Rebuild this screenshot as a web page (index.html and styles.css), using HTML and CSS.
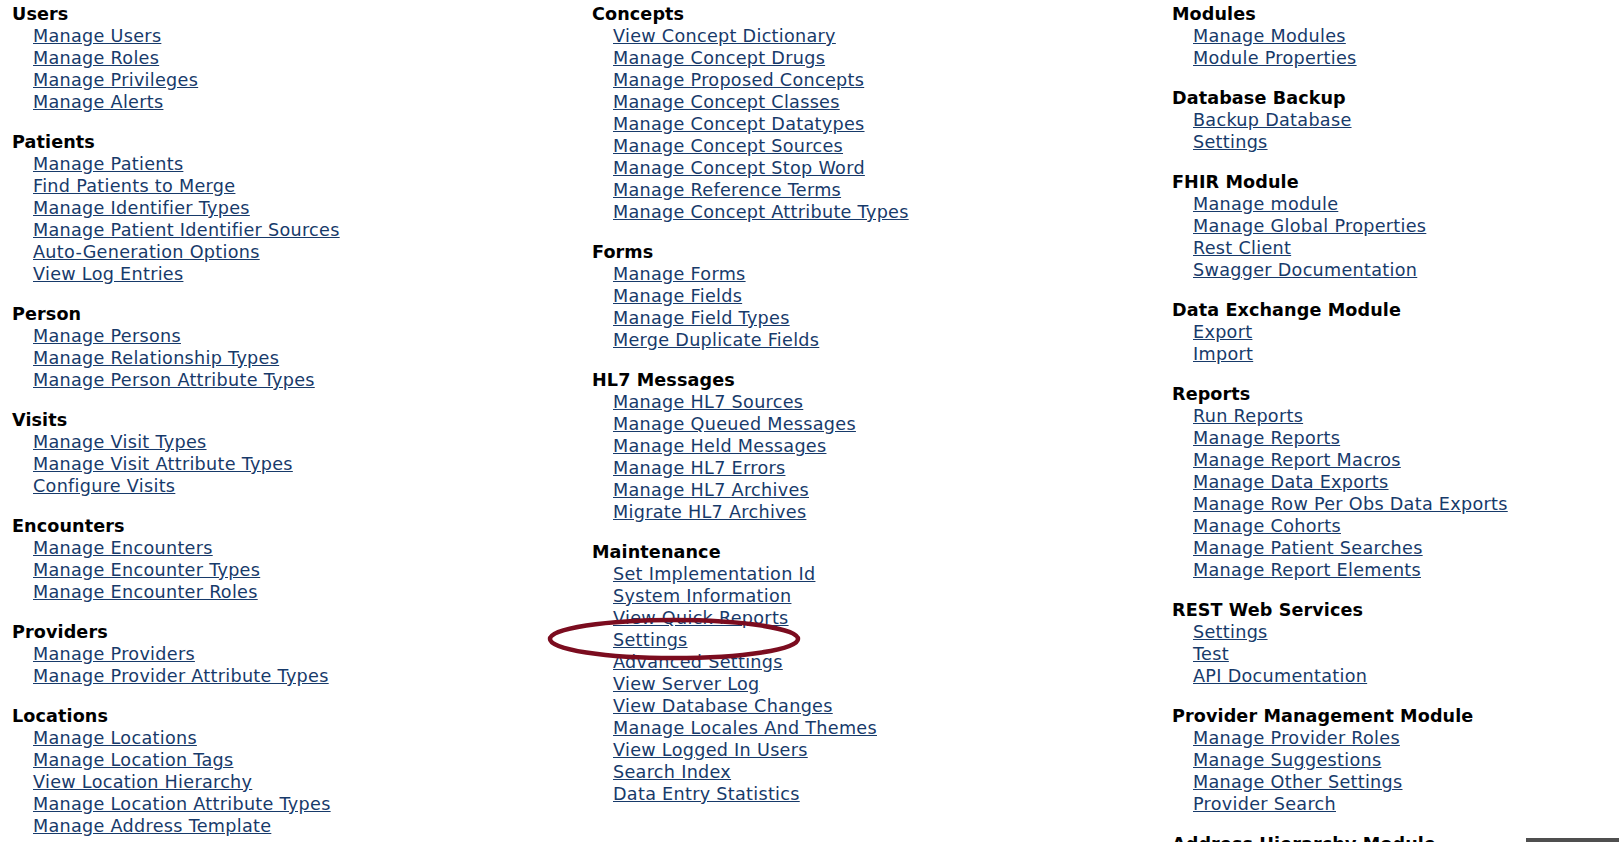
FILE: index.html
```html
<!DOCTYPE html>
<html>
<head>
<meta charset="utf-8">
<title>Administration</title>
<link rel="stylesheet" href="styles.css">
</head>
<body>
<div class="admin">
  <div class="col">
    <div class="section">
      <h4>Users</h4>
      <ul>
        <li><a href="#">Manage Users</a></li>
        <li><a href="#">Manage Roles</a></li>
        <li><a href="#">Manage Privileges</a></li>
        <li><a href="#">Manage Alerts</a></li>
      </ul>
    </div>
    <div class="section">
      <h4>Patients</h4>
      <ul>
        <li><a href="#">Manage Patients</a></li>
        <li><a href="#">Find Patients to Merge</a></li>
        <li><a href="#">Manage Identifier Types</a></li>
        <li><a href="#">Manage Patient Identifier Sources</a></li>
        <li><a href="#">Auto-Generation Options</a></li>
        <li><a href="#">View Log Entries</a></li>
      </ul>
    </div>
    <div class="section">
      <h4>Person</h4>
      <ul>
        <li><a href="#">Manage Persons</a></li>
        <li><a href="#">Manage Relationship Types</a></li>
        <li><a href="#">Manage Person Attribute Types</a></li>
      </ul>
    </div>
    <div class="section">
      <h4>Visits</h4>
      <ul>
        <li><a href="#">Manage Visit Types</a></li>
        <li><a href="#">Manage Visit Attribute Types</a></li>
        <li><a href="#">Configure Visits</a></li>
      </ul>
    </div>
    <div class="section">
      <h4>Encounters</h4>
      <ul>
        <li><a href="#">Manage Encounters</a></li>
        <li><a href="#">Manage Encounter Types</a></li>
        <li><a href="#">Manage Encounter Roles</a></li>
      </ul>
    </div>
    <div class="section">
      <h4>Providers</h4>
      <ul>
        <li><a href="#">Manage Providers</a></li>
        <li><a href="#">Manage Provider Attribute Types</a></li>
      </ul>
    </div>
    <div class="section">
      <h4>Locations</h4>
      <ul>
        <li><a href="#">Manage Locations</a></li>
        <li><a href="#">Manage Location Tags</a></li>
        <li><a href="#">View Location Hierarchy</a></li>
        <li><a href="#">Manage Location Attribute Types</a></li>
        <li><a href="#">Manage Address Template</a></li>
      </ul>
    </div>
  </div>

  <div class="col">
    <div class="section">
      <h4>Concepts</h4>
      <ul>
        <li><a href="#">View Concept Dictionary</a></li>
        <li><a href="#">Manage Concept Drugs</a></li>
        <li><a href="#">Manage Proposed Concepts</a></li>
        <li><a href="#">Manage Concept Classes</a></li>
        <li><a href="#">Manage Concept Datatypes</a></li>
        <li><a href="#">Manage Concept Sources</a></li>
        <li><a href="#">Manage Concept Stop Word</a></li>
        <li><a href="#">Manage Reference Terms</a></li>
        <li><a href="#">Manage Concept Attribute Types</a></li>
      </ul>
    </div>
    <div class="section">
      <h4>Forms</h4>
      <ul>
        <li><a href="#">Manage Forms</a></li>
        <li><a href="#">Manage Fields</a></li>
        <li><a href="#">Manage Field Types</a></li>
        <li><a href="#">Merge Duplicate Fields</a></li>
      </ul>
    </div>
    <div class="section">
      <h4>HL7 Messages</h4>
      <ul>
        <li><a href="#">Manage HL7 Sources</a></li>
        <li><a href="#">Manage Queued Messages</a></li>
        <li><a href="#">Manage Held Messages</a></li>
        <li><a href="#">Manage HL7 Errors</a></li>
        <li><a href="#">Manage HL7 Archives</a></li>
        <li><a href="#">Migrate HL7 Archives</a></li>
      </ul>
    </div>
    <div class="section">
      <h4>Maintenance</h4>
      <ul>
        <li><a href="#">Set Implementation Id</a></li>
        <li><a href="#">System Information</a></li>
        <li><a href="#">View Quick Reports</a></li>
        <li class="marked"><a href="#">Settings</a>
          <svg class="circle" width="258" height="48" viewBox="0 0 258 48" aria-hidden="true">
            <ellipse cx="129" cy="24" rx="124" ry="19" fill="none" stroke="#7b0c1f" stroke-width="4.5"/>
          </svg>
        </li>
        <li><a href="#">Advanced Settings</a></li>
        <li><a href="#">View Server Log</a></li>
        <li><a href="#">View Database Changes</a></li>
        <li><a href="#">Manage Locales And Themes</a></li>
        <li><a href="#">View Logged In Users</a></li>
        <li><a href="#">Search Index</a></li>
        <li><a href="#">Data Entry Statistics</a></li>
      </ul>
    </div>
  </div>

  <div class="col">
    <div class="section">
      <h4>Modules</h4>
      <ul>
        <li><a href="#">Manage Modules</a></li>
        <li><a href="#">Module Properties</a></li>
      </ul>
    </div>
    <div class="section">
      <h4>Database Backup</h4>
      <ul>
        <li><a href="#">Backup Database</a></li>
        <li><a href="#">Settings</a></li>
      </ul>
    </div>
    <div class="section">
      <h4>FHIR Module</h4>
      <ul>
        <li><a href="#">Manage module</a></li>
        <li><a href="#">Manage Global Properties</a></li>
        <li><a href="#">Rest Client</a></li>
        <li><a href="#">Swagger Documentation</a></li>
      </ul>
    </div>
    <div class="section">
      <h4>Data Exchange Module</h4>
      <ul>
        <li><a href="#">Export</a></li>
        <li><a href="#">Import</a></li>
      </ul>
    </div>
    <div class="section">
      <h4>Reports</h4>
      <ul>
        <li><a href="#">Run Reports</a></li>
        <li><a href="#">Manage Reports</a></li>
        <li><a href="#">Manage Report Macros</a></li>
        <li><a href="#">Manage Data Exports</a></li>
        <li><a href="#">Manage Row Per Obs Data Exports</a></li>
        <li><a href="#">Manage Cohorts</a></li>
        <li><a href="#">Manage Patient Searches</a></li>
        <li><a href="#">Manage Report Elements</a></li>
      </ul>
    </div>
    <div class="section">
      <h4>REST Web Services</h4>
      <ul>
        <li><a href="#">Settings</a></li>
        <li><a href="#">Test</a></li>
        <li><a href="#">API Documentation</a></li>
      </ul>
    </div>
    <div class="section">
      <h4>Provider Management Module</h4>
      <ul>
        <li><a href="#">Manage Provider Roles</a></li>
        <li><a href="#">Manage Suggestions</a></li>
        <li><a href="#">Manage Other Settings</a></li>
        <li><a href="#">Provider Search</a></li>
      </ul>
    </div>
    <div class="section">
      <h4>Address Hierarchy Module</h4>
      <ul>
        <li><a href="#">Manage Address Hierarchy</a></li>
      </ul>
    </div>
  </div>
</div>
<div class="corner-bar"></div>
</body>
</html>
```

FILE: styles.css
```css
html, body {
  margin: 0;
  padding: 0;
  background: #ffffff;
}

body {
  font-family: "DejaVu Sans", Verdana, sans-serif;
  font-size: 17.6px;
  line-height: 22px;
  color: #000000;
  overflow: hidden;
  height: 842px;
  position: relative;
}

.admin {
  display: grid;
  grid-template-columns: 580px 580px 1fr;
  padding: 3px 0 0 12px;
}

.section {
  margin-bottom: 18px;
}

.section h4 {
  margin: 0;
  font-size: 17.6px;
  font-weight: bold;
  line-height: 22px;
  letter-spacing: 0.1px;
}

.section ul {
  list-style: none;
  margin: 0;
  padding: 0 0 0 21px;
}

.section li {
  line-height: 22px;
}

.section a {
  color: #173a6a;
  text-decoration: underline;
  letter-spacing: 0.3px;
}

.marked {
  position: relative;
}

.circle {
  position: absolute;
  left: -68px;
  top: -14px;
  pointer-events: none;
}

.corner-bar {
  position: absolute;
  left: 1526px;
  top: 838px;
  width: 93px;
  height: 4px;
  background: #4f4f4f;
}
```
